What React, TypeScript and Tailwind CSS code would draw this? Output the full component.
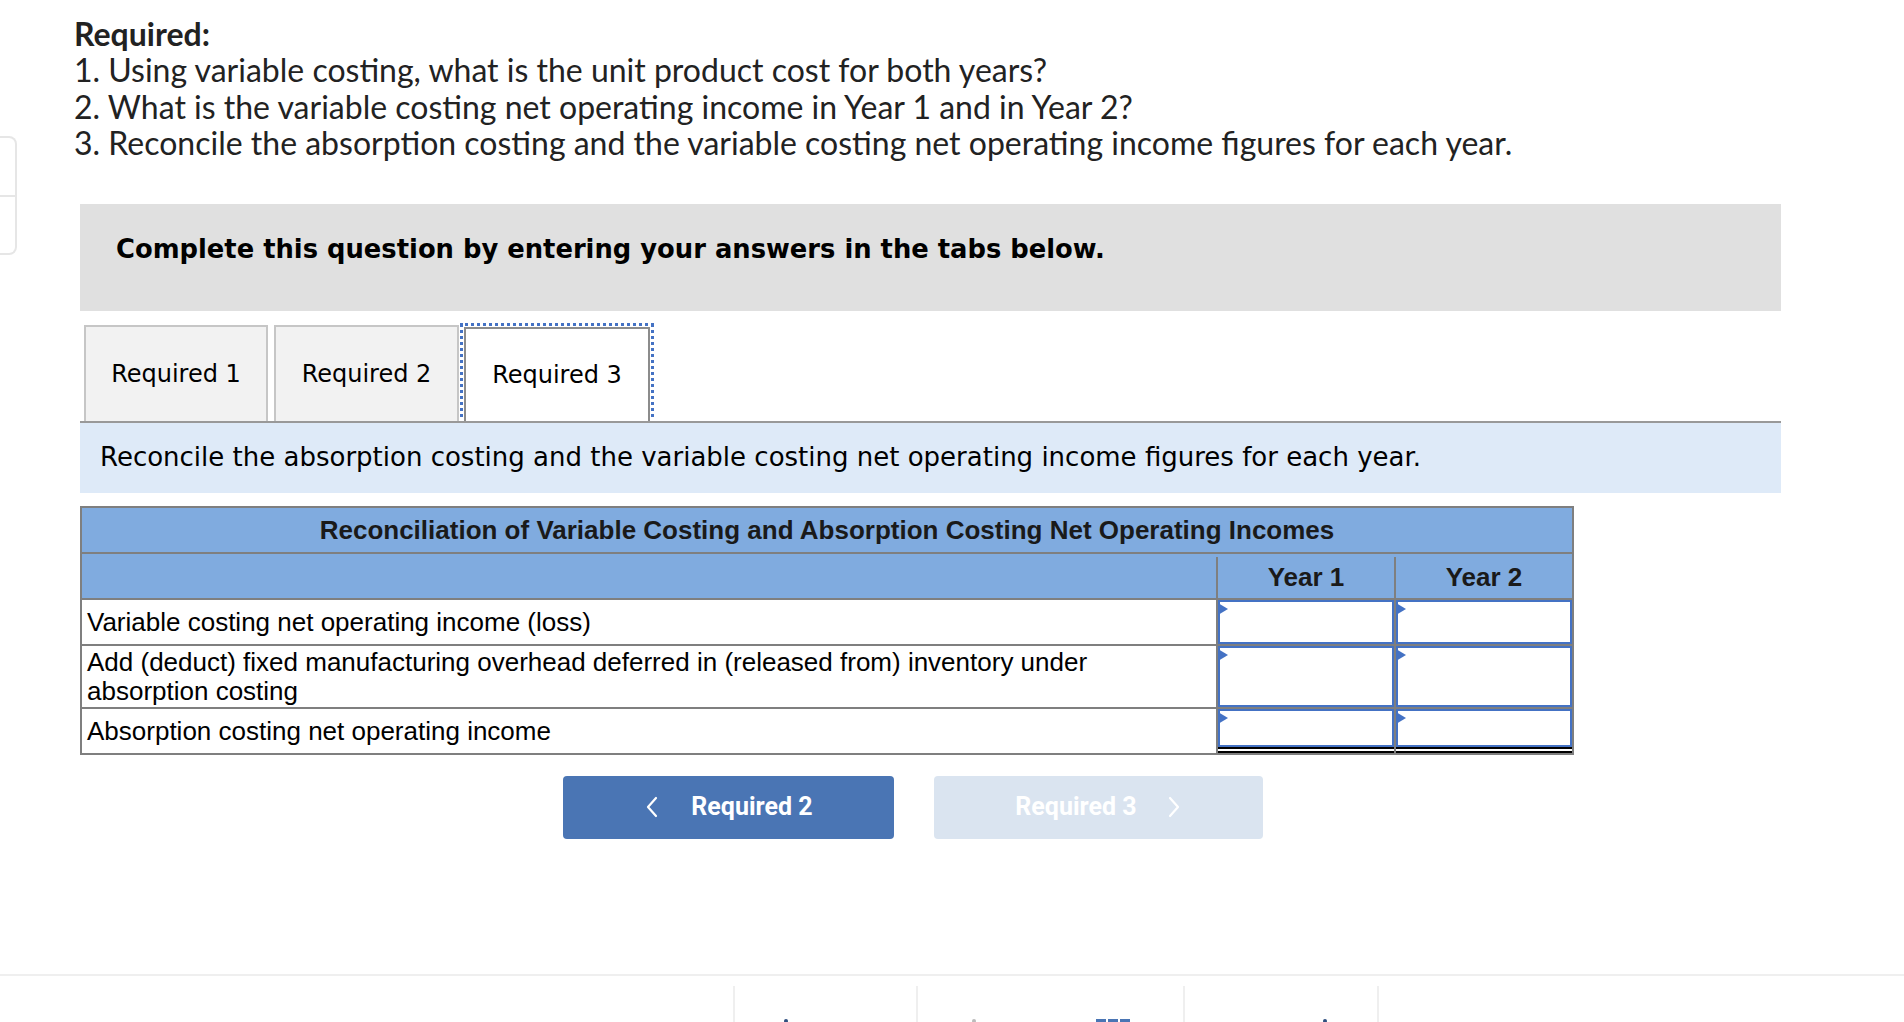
import React from 'react';

const questions = [
  '1. Using variable costing, what is the unit product cost for both years?',
  '2. What is the variable costing net operating income in Year 1 and in Year 2?',
  '3. Reconcile the absorption costing and the variable costing net operating income figures for each year.',
];

const rows = [
  { label: ['Variable costing net operating income (loss)'], h: 'h-[44px]', inputH: 'h-[44px]' },
  {
    label: ['Add (deduct) fixed manufacturing overhead deferred in (released from) inventory under', 'absorption costing'],
    h: 'h-[61px]',
    inputH: 'h-[61px]',
  },
  { label: ['Absorption costing net operating income'], h: 'h-[44px]', inputH: 'h-[38px]', last: true },
];

const Chevron = ({ dir }: { dir: 'left' | 'right' }) => (
  <svg width="12" height="22" viewBox="0 0 12 22" fill="none" stroke="currentColor" strokeWidth="2.2" strokeLinecap="round" strokeLinejoin="round">
    {dir === 'left' ? <polyline points="10,2 2,11 10,20" /> : <polyline points="2,2 10,11 2,20" />}
  </svg>
);

const AnswerCell = ({ h, last }: { h: string; last?: boolean }) => (
  <div className="w-[178px] border-l-2 border-[#7f7f7f] flex flex-col">
    <div className={`relative ${h} border-2 border-[#4472c4] bg-white`}>
      <span className="absolute left-[-2px] top-[1px] w-0 h-0 border-y-[6.5px] border-y-transparent border-l-[10px] border-l-[#4472c4]" />
    </div>
    {last && <div className="h-[6px] border-y-2 border-black" />}
  </div>
);

export default function App() {
  return (
    <div className="w-[1904px] h-[1022px] overflow-hidden bg-white flex flex-col text-[#222]">
      <div className="flex">
        {/* side stub at the left edge */}
        <div className="w-[17px] shrink-0">
          <div className="mt-[136px] h-[119px] border-y-2 border-r-2 border-[#e6e6e6] rounded-r-[8px] flex flex-col">
            <div className="h-[59px] border-b-2 border-[#e6e6e6]" />
          </div>
        </div>

        <div className="ml-[57px] flex flex-col">
          <div className="pt-[16px] text-[32px] leading-[36.4px] font-['Lato',sans-serif]">
            <div className="font-bold">Required:</div>
            {questions.map((q) => (
              <div key={q}>{q}</div>
            ))}
          </div>

          <div className="ml-[6px] mt-[42px] w-[1701px] h-[107px] bg-[#e0e0e0] pt-[28px] px-[36px]">
            <p className="font-['DejaVu_Sans',sans-serif] font-bold text-[25.8px] leading-[34px] text-black">
              Complete this question by entering your answers in the tabs below.
            </p>
          </div>

          {/* tabs */}
          <div className="ml-[6px] mt-[14px] flex items-end h-[96px] font-['DejaVu_Sans',sans-serif] text-[24px] text-black">
            <div className="ml-[4px] w-[184px] h-[96px] bg-[#f2f2f2] border-2 border-b-0 border-[#c6c6c6] flex items-center justify-center">
              Required 1
            </div>
            <div className="ml-[6px] w-[185px] h-[96px] bg-[#f2f2f2] border-2 border-b-0 border-[#c6c6c6] flex items-center justify-center">
              Required 2
            </div>
            <div className="ml-[5px] w-[186px] h-[94px] bg-white border-2 border-b-0 border-[#8c8c8c] outline-[3px] outline-dotted outline-offset-1 outline-[#4472c4] flex items-center justify-center">
              Required 3
            </div>
          </div>

          <div className="ml-[6px] w-[1701px] h-[72px] border-t-2 border-[#999] bg-[#deeaf8] px-[20px] flex items-center font-['DejaVu_Sans',sans-serif] text-[26px] text-black">
            Reconcile the absorption costing and the variable costing net operating income figures for each year.
          </div>

          {/* reconciliation table */}
          <div className="ml-[6px] mt-[13px] w-[1494px] border-2 border-[#7f7f7f] font-['Liberation_Sans',Arial,sans-serif] text-[26px] leading-[29px] text-black">
            <div className="h-[46px] pt-[2px] bg-[#80abdf] border-b-2 border-[#7f7f7f] flex items-center justify-center font-bold text-[#1a1a1a]">
              Reconciliation of Variable Costing and Absorption Costing Net Operating Incomes
            </div>
            <div className="h-[46px] pt-[3px] bg-[#80abdf] border-b-2 border-[#7f7f7f] flex font-bold text-[#1a1a1a]">
              <div className="w-[1134px]" />
              <div className="w-[178px] border-l-2 border-[#7f7f7f] flex items-center justify-center">Year 1</div>
              <div className="w-[178px] border-l-2 border-[#7f7f7f] flex items-center justify-center">Year 2</div>
            </div>
            {rows.map((r, i) => (
              <div key={i} className={`flex ${i < rows.length - 1 ? 'border-b-2 border-[#7f7f7f]' : ''}`}>
                <div className={`w-[1134px] ${r.h} px-[5px] pt-[2px] flex flex-col justify-center`}>
                  {r.label.map((l) => (
                    <div key={l}>{l}</div>
                  ))}
                </div>
                <AnswerCell h={r.inputH} last={r.last} />
                <AnswerCell h={r.inputH} last={r.last} />
              </div>
            ))}
          </div>

          {/* navigation buttons */}
          <div className="ml-[489px] mt-[21px] flex gap-[40px] font-['Roboto',sans-serif] font-bold text-[25px] text-white">
            <button className="w-[331px] h-[63px] rounded-[4px] bg-[#4a75b4] flex items-center justify-center gap-[33px] pl-[2px]">
              <Chevron dir="left" />
              <span>Required 2</span>
            </button>
            <button className="w-[329px] h-[63px] rounded-[4px] bg-[#dae4f0] flex items-center justify-center gap-[31px] pr-[2px]">
              <span>Required 3</span>
              <Chevron dir="right" />
            </button>
          </div>
        </div>
      </div>

      {/* footer toolbar */}
      <div className="mt-auto h-[48px] border-t-2 border-[#efefef] pt-[10px] flex">
        <div className="w-[733px]" />
        <div className="w-[183px] border-l-2 border-[#efefef] flex justify-center">
          <span className="mt-[33px] ml-[-80px] w-[4px] h-[4px] rounded-full bg-[#2f4f7f]" />
        </div>
        <div className="w-[267px] border-l-2 border-[#efefef] flex">
          <span className="mt-[33px] ml-[54px] w-[4px] h-[4px] rounded-full bg-[#bbb]" />
          <div className="mt-[33px] ml-[120px] flex gap-[2px]">
            <span className="w-[10px] h-[10px] bg-[#4a75b4]" />
            <span className="w-[10px] h-[10px] bg-[#4a75b4]" />
            <span className="w-[10px] h-[10px] bg-[#4a75b4]" />
          </div>
        </div>
        <div className="w-[194px] border-l-2 border-[#efefef] flex">
          <span className="mt-[33px] ml-[138px] w-[4px] h-[4px] rounded-full bg-[#2f4f7f]" />
        </div>
        <div className="flex-1 border-l-2 border-[#efefef]" />
      </div>
    </div>
  );
}
